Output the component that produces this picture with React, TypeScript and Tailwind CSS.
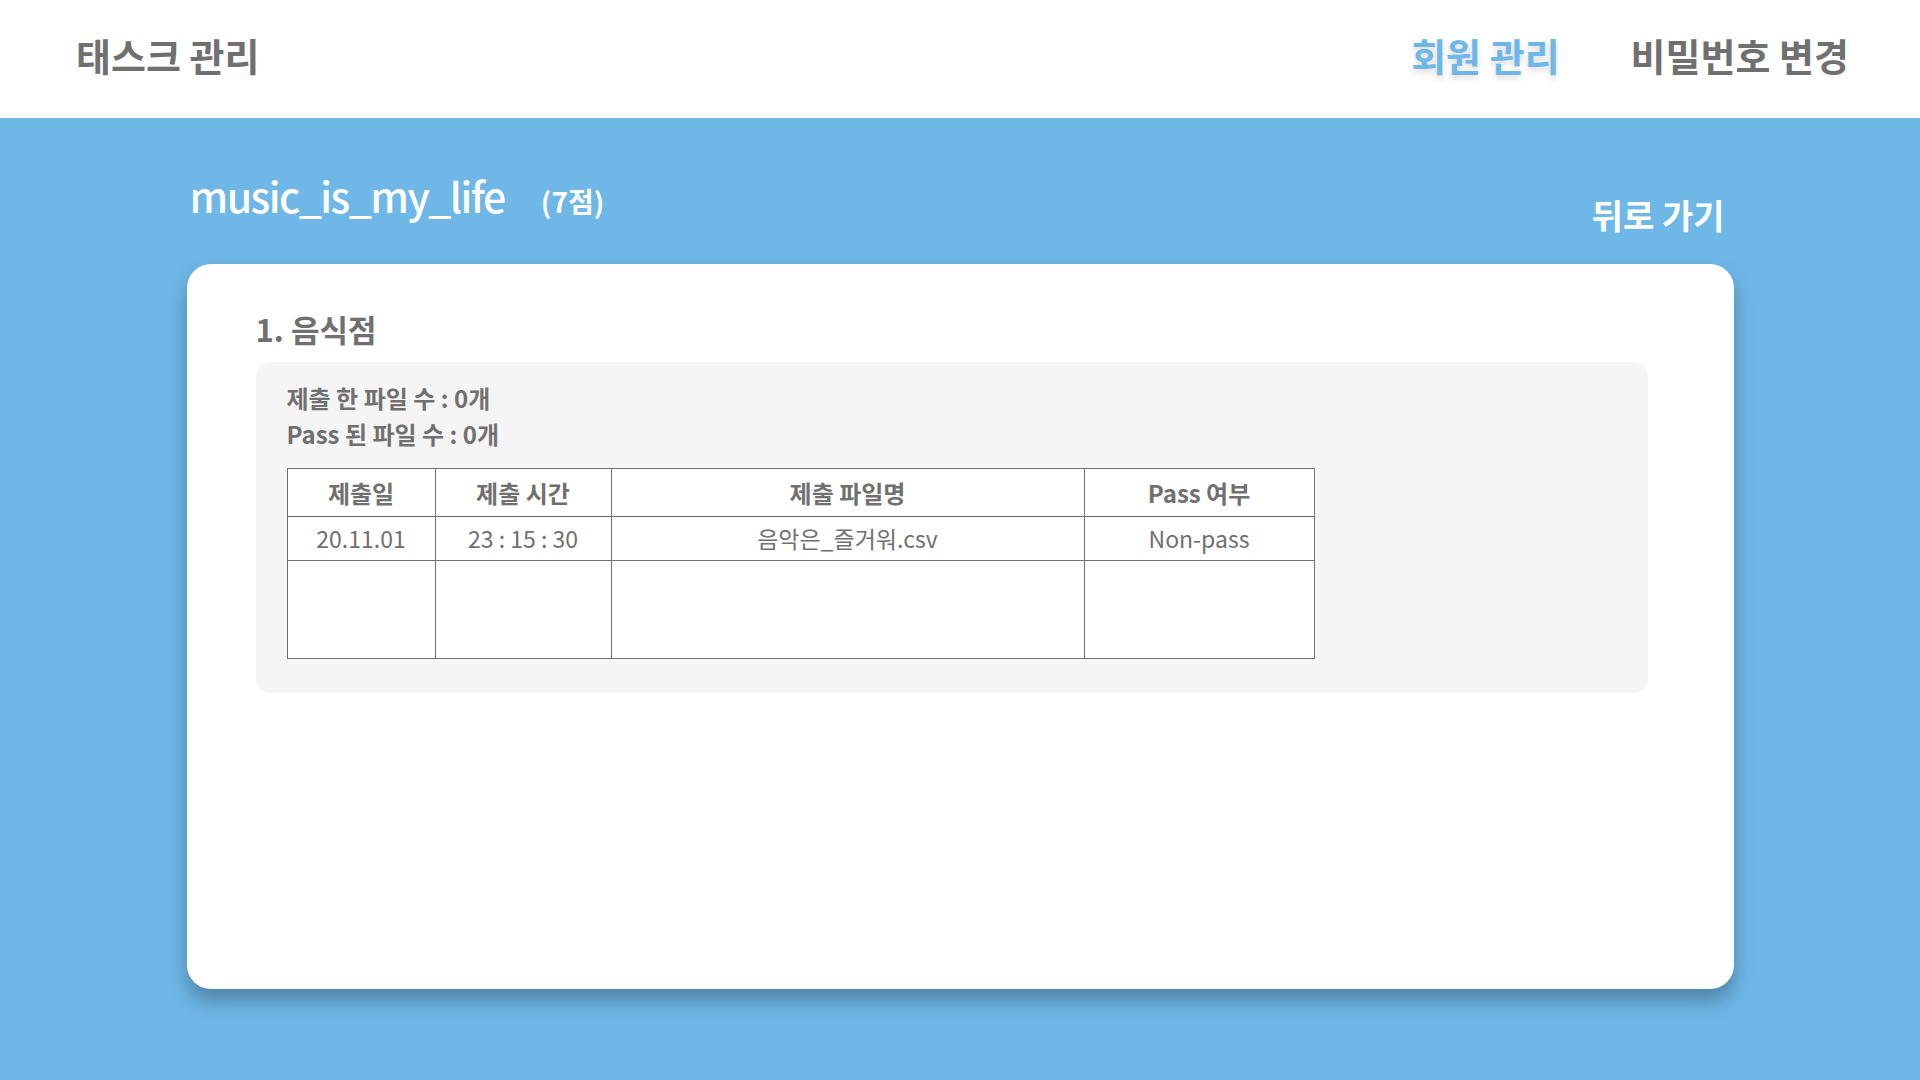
import React from 'react'

const font = { fontFamily: '"Noto Sans CJK KR", "Noto Sans", sans-serif' }

const rows = [
  { date: '20.11.01', time: '23 : 15 : 30', file: '음악은_즐거워.csv', pass: 'Non-pass' },
]

export default function App() {
  return (
    <div className="min-h-screen w-full bg-[#6eb7e7]" style={font}>
      {/* Top bar */}
      <header className="h-[118px] bg-white flex items-center justify-between pl-[76px] pr-[71px] pb-[8px]">
        <span className="text-[38px] font-bold text-[#707070] leading-none">태스크 관리</span>
        <nav className="flex items-center gap-[71px]">
          <span className="text-[38px] font-bold text-[#6eb7e7] leading-none [text-shadow:0_3px_6px_rgba(0,0,0,0.16)]">
            회원 관리
          </span>
          <span className="text-[38px] font-bold text-[#707070] leading-none">비밀번호 변경</span>
        </nav>
      </header>

      <main className="w-[1547px] mx-auto">
        {/* Title row */}
        <div className="h-[146px] flex justify-between items-start pl-[3px] pr-[9px]">
          <div className="flex items-baseline gap-[36px] pt-[57px]">
            <span className="text-[41px] font-medium text-white leading-none tracking-[-1.5px]">music_is_my_life</span>
            <span className="text-[28px] font-bold text-white leading-none">(7점)</span>
          </div>
          <span className="pt-[80px] text-[34px] font-bold text-white leading-none">뒤로 가기</span>
        </div>

        {/* Card */}
        <section className="h-[725px] bg-white rounded-[24px] shadow-[0_12px_20px_rgba(0,0,0,0.28)] pt-[49px] pl-[69px] pr-[86px]">
          <h2 className="text-[31px] font-bold text-[#707070] leading-none">1. 음식점</h2>

          <div className="mt-[18px] bg-[#f5f5f5] rounded-[14px] pt-[18px] pb-[34px] pl-[31px]">
            <p className="text-[24px] font-bold text-[#707070] leading-[36px]">제출 한 파일 수 : 0개</p>
            <p className="text-[24px] font-bold text-[#707070] leading-[36px]">Pass 된 파일 수 : 0개</p>

            <table className="mt-[16px] w-[1027px] border-collapse bg-white text-[23px] text-[#707070] table-fixed">
              <colgroup>
                <col className="w-[148px]" />
                <col className="w-[176px]" />
                <col className="w-[473px]" />
                <col className="w-[230px]" />
              </colgroup>
              <thead>
                <tr className="h-[48px] text-[24px]">
                  <th className="border border-[#707070] font-bold text-center">제출일</th>
                  <th className="border border-[#707070] font-bold text-center">제출 시간</th>
                  <th className="border border-[#707070] font-bold text-center">제출 파일명</th>
                  <th className="border border-[#707070] font-bold text-center">Pass 여부</th>
                </tr>
              </thead>
              <tbody>
                {rows.map((r) => (
                  <tr key={r.file} className="h-[44px]">
                    <td className="border border-[#707070] text-center">{r.date}</td>
                    <td className="border border-[#707070] text-center">{r.time}</td>
                    <td className="border border-[#707070] text-center">{r.file}</td>
                    <td className="border border-[#707070] text-center">{r.pass}</td>
                  </tr>
                ))}
                <tr className="h-[98px]">
                  <td className="border border-[#707070]" />
                  <td className="border border-[#707070]" />
                  <td className="border border-[#707070]" />
                  <td className="border border-[#707070]" />
                </tr>
              </tbody>
            </table>
          </div>
        </section>
      </main>
    </div>
  )
}
